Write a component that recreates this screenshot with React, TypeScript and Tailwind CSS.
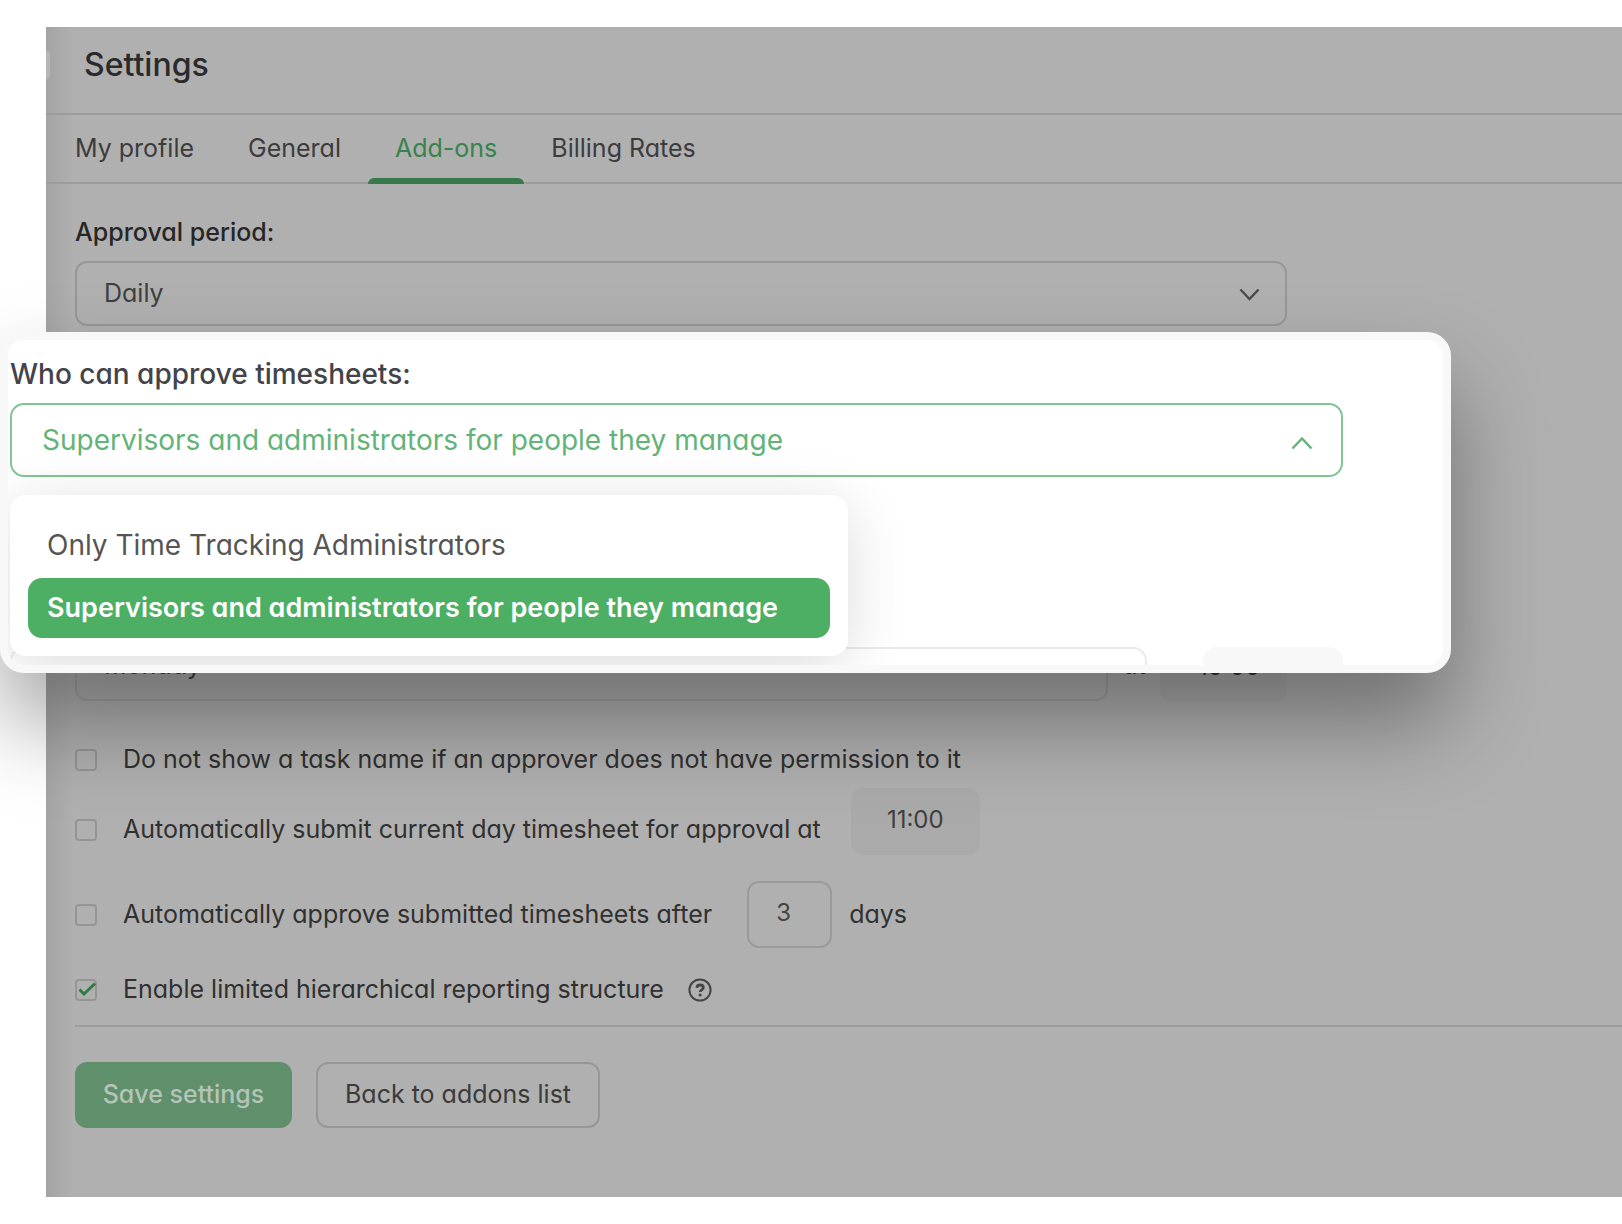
import { useState } from 'react';
import type { ReactNode } from 'react';
import clsx from 'clsx';

const TABS = ['My profile', 'General', 'Add-ons', 'Billing Rates'];
const APPROVERS = ['Only Time Tracking Administrators', 'Supervisors and administrators for people they manage'];

function Chevron({ up = false, className }: { up?: boolean; className?: string }) {
  return (
    <svg viewBox="0 0 22 14" fill="none" stroke="currentColor" strokeWidth="2.4" aria-hidden="true" className={className}>
      <path d={up ? 'M1.5 12.5 11 2.5l9.5 10' : 'M1.5 1.5 11 11.5l9.5-10'} />
    </svg>
  );
}

function HelpIcon() {
  return (
    <svg viewBox="0 0 24 24" fill="none" stroke="currentColor" aria-hidden="true" className="size-6">
      <circle cx="12" cy="12" r="10.6" strokeWidth="2" />
      <path d="M8.9 9.8c.1-1.8 1.3-2.8 3.2-2.8s3.2 1 3.2 2.6c0 2.2-3.1 2.2-3.1 4.4" strokeWidth="2.8" />
      <circle cx="12.1" cy="17" r="1.6" fill="currentColor" stroke="none" />
    </svg>
  );
}

interface CheckRowProps {
  id: string;
  label: string;
  checked?: boolean;
  className?: string;
  children?: ReactNode;
}

function CheckRow({ id, label, checked = false, className, children }: CheckRowProps) {
  const [on, setOn] = useState(checked);

  return (
    <div className={clsx('flex items-center', className)}>
      <label htmlFor={id} className="flex items-center gap-[26px]">
        <span className="relative block size-[22px]">
          <input
            id={id}
            type="checkbox"
            checked={on}
            onChange={(e) => setOn(e.target.checked)}
            className="block size-[22px] appearance-none rounded-[4px] border-2 border-[#000000]/15"
          />
          {on && (
            <svg viewBox="0 0 22 22" fill="none" stroke="#2f7a45" strokeWidth="3" className="pointer-events-none absolute inset-0">
              <path d="M4.5 10.5 9 15 20 4.5" />
            </svg>
          )}
        </span>
        <span className="pb-0.5">{label}</span>
      </label>
      {children}
    </div>
  );
}

function ApproverSpotlight() {
  const [value, setValue] = useState(APPROVERS[1]);

  return (
    <section className="absolute -left-[75px] -right-[164px] top-[6px] z-10 h-[341px] overflow-hidden rounded-[24px] border-8 border-[#f8f8f8] bg-white pl-0.5 pt-4 text-[28px] text-[#43434a] shadow-[0_50px_90px_rgba(0,0,0,0.36)]">
      <label htmlFor="approver" className="mb-[11px] block font-medium leading-9">
        Who can approve timesheets:
      </label>
      <div className="relative mr-[100px]">
        <select
          id="approver"
          value={value}
          onChange={(e) => setValue(e.target.value)}
          className="block h-[74px] w-full appearance-none rounded-[14px] border-2 border-[#82c594] pl-[30px] text-[#63b379]"
        >
          {APPROVERS.map((name) => (
            <option key={name}>{name}</option>
          ))}
        </select>
        <Chevron up className="pointer-events-none absolute right-[30px] top-[33px] w-[22px] text-[#63b379]" />
        <ul
          role="listbox"
          aria-label="Approvers"
          className="absolute left-0 top-[92px] w-[838px] rounded-2xl bg-white px-[18px] pb-[18px] pt-[23px] shadow-[0_10px_60px_rgba(0,0,0,0.14)]"
        >
          {APPROVERS.map((name) => (
            <li key={name} role="option" aria-selected={name === value}>
              <button
                type="button"
                onClick={() => setValue(name)}
                className={clsx(
                  'block h-[60px] w-full rounded-[14px] px-[19px] text-left',
                  name === value ? 'bg-[#4caf64] text-[27px] font-semibold text-white' : 'pb-1.5 text-[#555555]'
                )}
              >
                {name}
              </button>
            </li>
          ))}
        </ul>
      </div>
      <div aria-hidden="true" className="mr-[100px] mt-[170px] flex gap-14">
        <div className="h-[74px] flex-1 rounded-[14px] border-2 border-[#ebebeb]" />
        <div className="h-[74px] w-[140px] rounded-[14px] bg-[#f8f8f8]" />
      </div>
    </section>
  );
}

export default function App() {
  const [tab, setTab] = useState('Add-ons');

  return (
    <div className="overflow-hidden bg-white pb-[27px] pl-[46px] pt-[27px] font-['Inter',sans-serif] text-[25px] leading-9 text-[#303030] [font-feature-settings:'cv11']">
      <main className="relative bg-[#b0b0b0] bg-[linear-gradient(to_right,#a4a4a4,#b0b0b0_28px)] pb-[69px]">
        <div aria-hidden="true" className="absolute left-0 top-6 h-7 w-1 rounded-r-full bg-[#b6b6b6]" />
        <header className="flex h-[88px] items-center border-b-2 border-[#9c9c9c] pb-2.5 pl-[38px]">
          <h1 className="text-[32px] font-medium text-[#2a2a2a]">Settings</h1>
        </header>
        <nav className="flex h-[69px] border-b-2 border-[#9c9c9c] pl-0.5">
          {TABS.map((name) => (
            <button
              key={name}
              type="button"
              onClick={() => setTab(name)}
              className={clsx('relative px-[27px] pb-0.5', name === tab ? 'text-[#36834b]' : 'text-[#3c3c3c]')}
            >
              {name}
              {name === tab && <span className="absolute inset-x-0 -bottom-0.5 h-1.5 rounded-t-md bg-[#36794a]" />}
            </button>
          ))}
        </nav>

        <form className="pl-[29px]" onSubmit={(e) => e.preventDefault()}>
          <div className="mr-[335px] pt-[30px]">
            <label htmlFor="period" className="mb-[11px] block font-medium text-[#262626]">
              Approval period:
            </label>
            <div className="relative">
              <select
                id="period"
                defaultValue="Daily"
                className="block h-[65px] w-full appearance-none rounded-[12px] border-2 border-[#979797] pb-0.5 pl-[27px] text-[#3f3f3f]"
              >
                <option>Daily</option>
                <option>Weekly</option>
              </select>
              <Chevron className="pointer-events-none absolute right-[27px] top-[27px] w-[21px] text-[#4a4a4a]" />
            </div>

            <div className="relative h-[308px]">
              <ApproverSpotlight />
            </div>

            <div className="flex items-center">
              <select
                aria-label="Reminder day"
                defaultValue="Monday"
                className="h-[66px] flex-1 appearance-none rounded-[12px] border-2 border-[#a2a2a2] pb-1.5 pl-[27px] text-[#3f3f3f]"
              >
                <option>Monday</option>
              </select>
              <label htmlFor="reminder-time" className="w-[52px] pb-1.5 text-center">
                at
              </label>
              <input
                id="reminder-time"
                defaultValue="10:00"
                className="h-[68px] w-[127px] rounded-[12px] bg-[#acacac] pb-1 pl-[38px] text-[24px] text-[#303030]"
              />
            </div>
          </div>

          <CheckRow id="hide-task" className="mt-10 h-9" label="Do not show a task name if an approver does not have permission to it" />
          <CheckRow id="auto-submit" className="mt-2.5 h-[67px] [&>label]:pt-4" label="Automatically submit current day timesheet for approval at">
            <input
              aria-label="Submit time"
              defaultValue="11:00"
              className="ml-[30px] h-[67px] w-[129px] rounded-[12px] bg-[#aaaaaa] pb-1 text-center text-[24px] text-[#3f3f3f]"
            />
          </CheckRow>
          <CheckRow id="auto-approve" className="mt-[26px] h-[67px]" label="Automatically approve submitted timesheets after">
            <input
              aria-label="Days until approval"
              defaultValue="3"
              className="ml-[35px] mr-[17px] h-[67px] w-[85px] rounded-[12px] border-2 border-[#9a9a9a] pb-1 pl-[27px] text-[24px] text-[#444444]"
            />
            <span className="pb-0.5">days</span>
          </CheckRow>
          <CheckRow id="hierarchy" checked className="mt-6 h-9" label="Enable limited hierarchical reporting structure">
            <button type="button" aria-label="Help" className="ml-6 text-[#454545]">
              <HelpIcon />
            </button>
          </CheckRow>

          <div className="mt-[17px] flex gap-6 border-t-2 border-[#9c9c9c] pt-[35px]">
            <button type="submit" className="h-[66px] w-[217px] rounded-[12px] bg-[#60906b] pb-0.5 font-medium text-[#b5c4b8]">
              Save settings
            </button>
            <button type="button" className="h-[66px] w-[284px] rounded-[12px] border-2 border-[#979797] pb-0.5 text-[#3a3a3a]">
              Back to addons list
            </button>
          </div>
        </form>
      </main>
    </div>
  );
}
